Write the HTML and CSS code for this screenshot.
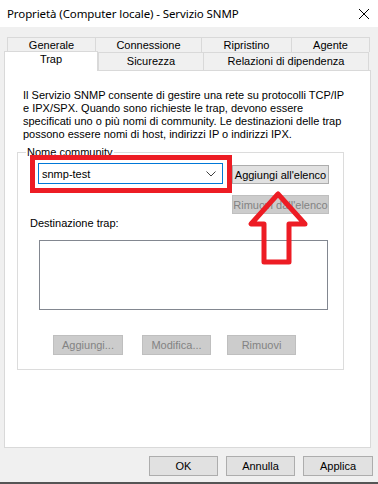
FILE: index.html
```html
<!DOCTYPE html>
<html lang="it">
<head>
    <meta charset="UTF-8">
    <meta name="viewport" content="width=device-width, initial-scale=1.0">
    <title>Proprietà - Servizio SNMP</title>
    <link rel="stylesheet" href="styles.css">
</head>
<body>
    <div class="window">
        <div class="titlebar">
            <span class="title">Proprietà (Computer locale) - Servizio SNMP</span>
            <svg class="close" width="12" height="12" viewBox="0 0 12 12">
                <path d="M1 1 L11 11 M11 1 L1 11" stroke="#000" stroke-width="1" fill="none" />
            </svg>
        </div>

        <div class="dialog">
            <div class="tabs">
                <div class="tab-row row-back">
                    <div class="tab" style="width: 88px">Generale</div>
                    <div class="tab" style="width: 106px">Connessione</div>
                    <div class="tab" style="width: 90px">Ripristino</div>
                    <div class="tab last" style="width: 79px">Agente</div>
                </div>
                <div class="tab-row row-front">
                    <div class="tab selected" style="width: 94px">Trap</div>
                    <div class="tab" style="width: 105px">Sicurezza</div>
                    <div class="tab last" style="width: 166px">Relazioni di dipendenza</div>
                </div>
            </div>

            <div class="panel">
                <p class="intro">
                    Il Servizio SNMP consente di gestire una rete su protocolli TCP/IP<br>
                    e IPX/SPX. Quando sono richieste le trap, devono essere<br>
                    specificati uno o più nomi di community. Le destinazioni delle trap<br>
                    possono essere nomi di host, indirizzi IP o indirizzi IPX.
                </p>

                <fieldset class="group">
                    <legend>Nome community</legend>

                    <div class="community-row">
                        <div class="combo">
                            <span class="combo-value">snmp-test</span>
                            <svg class="chevron" width="10" height="6" viewBox="0 0 10 6">
                                <path d="M0.5 0.5 L5 5 L9.5 0.5" stroke="#404040" stroke-width="1" fill="none" />
                            </svg>
                        </div>
                        <button class="btn add-list">Aggiungi all'elenco</button>
                    </div>
                    <div class="remove-row">
                        <button class="btn disabled remove-list">Rimuovi dall'elenco</button>
                    </div>

                    <div class="dest-label">Destinazione trap:</div>
                    <div class="listbox"></div>

                    <div class="dest-buttons">
                        <button class="btn disabled b-add">Aggiungi...</button>
                        <button class="btn disabled b-edit">Modifica...</button>
                        <button class="btn disabled b-remove">Rimuovi</button>
                    </div>
                </fieldset>
            </div>

            <div class="actions">
                <button class="btn action">OK</button>
                <button class="btn action">Annulla</button>
                <button class="btn action wide">Applica</button>
            </div>
        </div>

        <!-- red annotation drawn over the screenshot -->
        <svg class="markup" width="378" height="484" viewBox="0 0 378 484">
            <rect x="32.5" y="157.5" width="197" height="33" fill="none" stroke="#ed1c24" stroke-width="5" />
            <polygon points="278,194 251,224 264,224 264,262 289,262 289,224 305,224"
                     fill="none" stroke="#ed1c24" stroke-width="5" stroke-linejoin="round" />
        </svg>
    </div>
</body>
</html>
```

FILE: styles.css
```css
* { box-sizing: border-box; }
body {
    margin: 0;
    font-family: "Liberation Sans", Arial, sans-serif;
    font-size: 11px;
    color: #000;
}
.window {
    position: relative;
    width: 378px;
    height: 484px;
    background: #f0f0f0;
    border-bottom: 2px solid #555;
    overflow: hidden;
}
.titlebar {
    height: 27px;
    background: #fff;
    display: flex;
    align-items: center;
    justify-content: space-between;
    padding: 0 8px 0 7px;
}
.title {
    font-family: "Noto Sans", sans-serif;
    font-size: 11.5px;
    letter-spacing: -0.1px;
}
.close { margin-top: 1px; }

.dialog { padding: 10px 0 0 4px; }

/* Tabs */
.tab-row {
    display: flex;
    align-items: flex-start;
}
.row-back { padding-left: 3px; }
.tab {
    height: 15px;
    line-height: 14px;
    text-align: center;
    border-top: 1px solid #d9d9d9;
    border-left: 1px solid #d9d9d9;
    background: #f0f0f0;
    white-space: nowrap;
}
.tab.last { border-right: 1px solid #d9d9d9; }
.row-front .tab {
    height: 18px;
    line-height: 17px;
}
.row-front .tab.selected {
    position: relative;
    z-index: 1;
    height: 20px;
    line-height: 14px;
    margin-top: -1px;
    margin-bottom: -1px;
    background: #fff;
    border-right: 1px solid #d9d9d9;
}

/* Panel */
.panel {
    width: 367px;
    height: 378px;
    background: #fff;
    border: 1px solid #d9d9d9;
    padding-top: 18px;
}
.intro {
    margin: 0 0 5px 18px;
    line-height: 13px;
    white-space: nowrap;
}
.group {
    margin: 0 0 0 12px;
    width: 327px;
    padding: 0 0 14px 0;
    border: 1px solid #dcdcdc;
}
.group legend {
    margin-left: 8px;
    padding: 0 1px;
    line-height: 13px;
}

.community-row {
    display: flex;
    align-items: flex-end;
    margin: 4px 0 0 20px;
}
.combo {
    width: 185px;
    height: 21px;
    border: 1px solid #0078d7;
    display: flex;
    align-items: center;
    justify-content: space-between;
    padding: 0 6px 0 3px;
    background: #fff;
}
.combo-value { font-size: 11px; }
.chevron { margin-top: 1px; }

.btn {
    font-family: "Liberation Sans", Arial, sans-serif;
    font-size: 11px;
    color: #000;
    background: #e1e1e1;
    border: 1px solid #adadad;
    padding: 0;
    height: 19px;
    white-space: nowrap;
}
.btn.disabled {
    color: #838383;
    background: #cccccc;
    border-color: #bfbfbf;
}
.add-list {
    width: 97px;
    margin-left: 9px;
}
.remove-row { margin: 11px 0 0 214px; }
.remove-list { width: 97px; }

.dest-label {
    margin: 3px 0 0 12px;
    line-height: 13px;
}
.listbox {
    margin: 10px 0 0 21px;
    width: 289px;
    height: 70px;
    border: 1px solid #828790;
    background: #fff;
}
.dest-buttons {
    display: flex;
    margin: 25px 0 0 35px;
}
.dest-buttons .btn { height: 20px; }
.b-add { width: 70px; }
.b-edit { width: 69px; margin-left: 19px; }
.b-remove { width: 69px; margin-left: 16px; }

/* Bottom buttons */
.actions {
    display: flex;
    justify-content: flex-end;
    gap: 8px;
    margin-top: 8px;
    padding-right: 5px;
}
.action {
    width: 69px;
    height: 20px;
}
.action.wide { width: 70px; }

.markup {
    position: absolute;
    left: 0;
    top: 0;
    pointer-events: none;
}
```
